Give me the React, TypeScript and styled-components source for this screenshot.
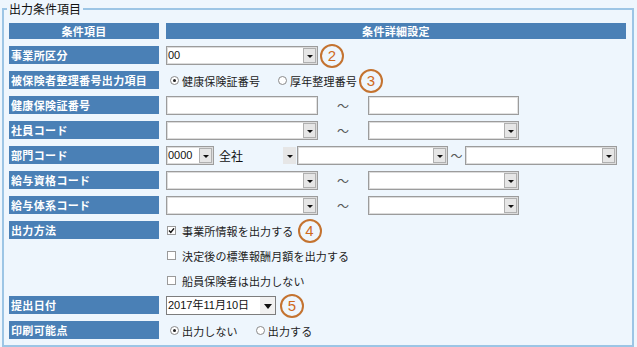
import React from "react";
import styled, { createGlobalStyle } from "styled-components";

const GlobalStyle = createGlobalStyle`
  html, body { margin: 0; padding: 0; background: #eef6fd; }
  body {
    width: 637px; height: 347px; overflow: hidden;
    font-family: "Noto Sans CJK JP", "Liberation Sans", sans-serif;
    font-size: 11px; color: #222;
  }
`;

const JP = `"Noto Sans CJK JP", "Liberation Sans", sans-serif`;
const LAT = `"Liberation Sans", "Noto Sans CJK JP", sans-serif`;

const Frame = styled.fieldset`
  margin: 0 0 0 2px;
  width: 632px;
  height: 347px;
  box-sizing: border-box;
  border: 2px solid #9cc5e5;
  padding: 0 0 0 5px;
  min-width: 0;
`;

const Legend = styled.legend`
  font-family: ${JP};
  font-size: 12px;
  line-height: 17px;
  color: #111;
  padding: 0 2px;
  margin-left: -2px;
`;

const Content = styled.div`
  padding-top: 6px;
  display: flex;
  flex-direction: column;
  gap: 6px;
`;

const HeaderRow = styled.div`
  display: flex;
  gap: 7px;
  height: 16px;
  margin-bottom: 1px;
`;

const HeadCell = styled.div<{ $w: number }>`
  width: ${(p) => p.$w}px;
  height: 16px;
  background: #4a80b6;
  color: #fff;
  font-family: ${JP};
  font-weight: 700;
  font-size: 11px;
  letter-spacing: 0.3px;
  line-height: 16px;
  text-align: center;
`;

const Row = styled.div`
  display: flex;
  align-items: flex-start;
  gap: 7px;
  height: 19px;
`;

const Label = styled.div<{ $blank?: boolean }>`
  width: 150px;
  height: 18px;
  flex: none;
  box-sizing: border-box;
  padding-left: 2px;
  background: ${(p) => (p.$blank ? "transparent" : "#4a80b6")};
  color: #fff;
  font-family: ${JP};
  font-weight: 700;
  font-size: 11px;
  letter-spacing: 0.35px;
  line-height: 18px;
  white-space: nowrap;
`;

const Field = styled.div<{ $pad?: number }>`
  display: flex;
  align-items: center;
  height: 19px;
  padding-left: ${(p) => p.$pad ?? 0}px;
`;

const SelectBox = styled.div<{ $w: number; $variant: "box" | "flat" | "date" }>`
  width: ${(p) => p.$w}px;
  height: 19px;
  box-sizing: border-box;
  display: flex;
  align-items: stretch;
  flex: none;
  background: ${(p) => (p.$variant === "flat" ? "transparent" : "#fff")};
  border: ${(p) =>
    p.$variant === "flat" ? "1px solid transparent" : p.$variant === "date" ? "1px solid #7d7d7d" : "1px solid #9c9c9c"};
  box-shadow: ${(p) => (p.$variant === "box" ? "inset 0 0 0 1px #dcdcdc" : "none")};
`;

const SelectValue = styled.div<{ $jp?: boolean }>`
  flex: 1;
  padding-left: ${(p) => (p.$jp ? 4 : 1)}px;
  font-family: ${(p) => (p.$jp ? JP : LAT)};
  font-size: ${(p) => (p.$jp ? 12 : 11)}px;
  line-height: 17px;
  color: #111;
  white-space: nowrap;
  overflow: hidden;
`;

const DropButton = styled.div<{ $variant: "box" | "flat" | "date" }>`
  width: ${(p) => (p.$variant === "date" ? 15 : 13)}px;
  box-sizing: border-box;
  margin: ${(p) => (p.$variant === "box" ? "1px" : "0")};
  background: ${(p) => (p.$variant === "date" ? "#f1f1f1" : "#e6e6e6")};
  border: ${(p) => (p.$variant === "box" ? "1px solid #b0b0b0" : "none")};
  display: flex;
  align-items: center;
  justify-content: center;
  &::after {
    content: "";
    display: block;
    margin-top: 2px;
    border-left: ${(p) => (p.$variant === "date" ? 4 : 3)}px solid transparent;
    border-right: ${(p) => (p.$variant === "date" ? 4 : 3)}px solid transparent;
    border-top: ${(p) => (p.$variant === "date" ? 5 : 3)}px solid #111;
  }
`;

const TextBox = styled.div<{ $w: number }>`
  width: ${(p) => p.$w}px;
  height: 19px;
  box-sizing: border-box;
  background: #fff;
  border: 1px solid #9c9c9c;
  box-shadow: inset 0 0 0 1px #e2e2e2;
  flex: none;
`;

const Tilde = styled.div<{ $w: number }>`
  width: ${(p) => p.$w}px;
  flex: none;
  text-align: center;
  font-family: ${JP};
  font-size: 12px;
  color: #555;
  line-height: 19px;
`;

const Option = styled.div<{ $gapAfter?: number }>`
  display: flex;
  align-items: center;
  gap: 3px;
  margin-right: ${(p) => p.$gapAfter ?? 0}px;
  font-family: ${JP};
  font-size: 11px;
  letter-spacing: 0.15px;
  color: #222;
  white-space: nowrap;
`;

const RadioMark = styled.span<{ $on: boolean }>`
  width: 9px;
  height: 9px;
  box-sizing: border-box;
  border: 1px solid #8a8a8a;
  border-radius: 50%;
  background: #fff;
  display: flex;
  align-items: center;
  justify-content: center;
  &::after {
    content: "";
    width: 3px;
    height: 3px;
    border-radius: 50%;
    background: ${(p) => (p.$on ? "#222" : "transparent")};
  }
`;

const CheckMark = styled.span`
  width: 9px;
  height: 9px;
  box-sizing: border-box;
  border: 1px solid #9a9a9a;
  background: #fff;
  margin-left: 1px;
  margin-right: 3px;
  display: flex;
  align-items: center;
  justify-content: center;
  svg { display: block; }
`;

const Badge = styled.div<{ $ml?: number }>`
  width: 24px;
  height: 24px;
  flex: none;
  box-sizing: border-box;
  margin-left: ${(p) => p.$ml ?? 2}px;
  border: 2px solid #c47330;
  border-radius: 50%;
  color: #d0691c;
  font-family: ${LAT};
  font-size: 15px;
  line-height: 20px;
  text-align: center;
  background: transparent;
`;

type Variant = "box" | "flat" | "date";

function Select({ w, value = "", variant = "box", jp }: { w: number; value?: string; variant?: Variant; jp?: boolean }) {
  return (
    <SelectBox $w={w} $variant={variant}>
      <SelectValue $jp={jp}>{value}</SelectValue>
      <DropButton $variant={variant} />
    </SelectBox>
  );
}

function Radio({ on, children, gapAfter }: { on: boolean; children: React.ReactNode; gapAfter?: number }) {
  return (
    <Option $gapAfter={gapAfter}>
      <RadioMark $on={on} />
      {children}
    </Option>
  );
}

function Check({ on, children }: { on: boolean; children: React.ReactNode }) {
  return (
    <Option>
      <CheckMark>
        {on && (
          <svg width="7" height="7" viewBox="0 0 7 7">
            <path d="M1 3.5 L2.8 5.4 L6 1.4" stroke="#111" strokeWidth="1.5" fill="none" />
          </svg>
        )}
      </CheckMark>
      {children}
    </Option>
  );
}

function RangeSelect() {
  return (
    <Field>
      <Select w={152} />
      <Tilde $w={50}>〜</Tilde>
      <Select w={151} />
    </Field>
  );
}

export default function App() {
  return (
    <>
      <GlobalStyle />
      <Frame>
        <Legend>出力条件項目</Legend>
        <Content>
          <HeaderRow>
            <HeadCell $w={150}>条件項目</HeadCell>
            <HeadCell $w={460}>条件詳細設定</HeadCell>
          </HeaderRow>

          <Row>
            <Label>事業所区分</Label>
            <Field>
              <Select w={152} value="00" />
              <Badge>2</Badge>
            </Field>
          </Row>

          <Row>
            <Label>被保険者整理番号出力項目</Label>
            <Field $pad={4}>
              <Radio on gapAfter={18}>健康保険証番号</Radio>
              <Radio on={false}>厚年整理番号</Radio>
              <Badge>3</Badge>
            </Field>
          </Row>

          <Row>
            <Label>健康保険証番号</Label>
            <Field>
              <TextBox $w={152} />
              <Tilde $w={50}>〜</Tilde>
              <TextBox $w={151} />
            </Field>
          </Row>

          <Row>
            <Label>社員コード</Label>
            <RangeSelect />
          </Row>

          <Row>
            <Label>部門コード</Label>
            <Field>
              <Select w={48} value="0000" />
              <Select w={83} value="全社" variant="flat" jp />
              <Select w={151} />
              <Tilde $w={17}>〜</Tilde>
              <Select w={152} />
            </Field>
          </Row>

          <Row>
            <Label>給与資格コード</Label>
            <RangeSelect />
          </Row>

          <Row>
            <Label>給与体系コード</Label>
            <RangeSelect />
          </Row>

          <Row>
            <Label>出力方法</Label>
            <Field>
              <Check on>事業所情報を出力する</Check>
              <Badge $ml={4}>4</Badge>
            </Field>
          </Row>

          <Row>
            <Label $blank />
            <Field>
              <Check on={false}>決定後の標準報酬月額を出力する</Check>
            </Field>
          </Row>

          <Row>
            <Label $blank />
            <Field>
              <Check on={false}>船員保険者は出力しない</Check>
            </Field>
          </Row>

          <Row>
            <Label>提出日付</Label>
            <Field>
              <Select w={110} value="2017年11月10日" variant="date" />
              <Badge $ml={4}>5</Badge>
            </Field>
          </Row>

          <Row>
            <Label>印刷可能点</Label>
            <Field $pad={4}>
              <Radio on gapAfter={18}>出力しない</Radio>
              <Radio on={false}>出力する</Radio>
            </Field>
          </Row>
        </Content>
      </Frame>
    </>
  );
}
